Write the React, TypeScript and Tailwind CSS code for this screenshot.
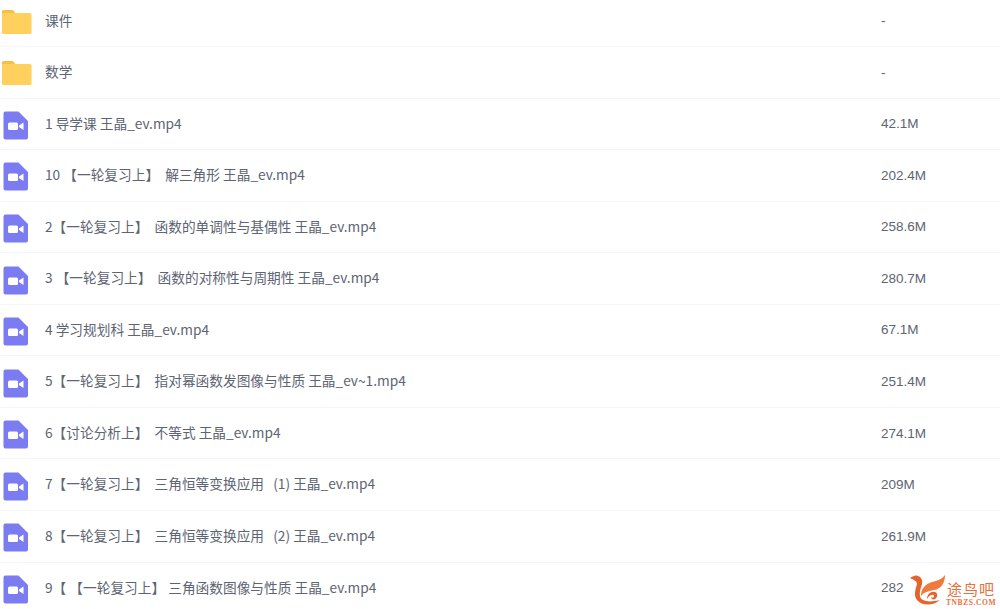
import React from "react";

const files = [
  { name: "课件", size: "-", folder: true },
  { name: "数学", size: "-", folder: true },
  { name: "1 导学课 王晶_ev.mp4", size: "42.1M" },
  { name: "10 【一轮复习上】  解三角形 王晶_ev.mp4", size: "202.4M" },
  { name: "2【一轮复习上】  函数的单调性与基偶性 王晶_ev.mp4", size: "258.6M" },
  { name: "3 【一轮复习上】  函数的对称性与周期性 王晶_ev.mp4", size: "280.7M" },
  { name: "4 学习规划科 王晶_ev.mp4", size: "67.1M" },
  { name: "5【一轮复习上】  指对幂函数发图像与性质 王晶_ev~1.mp4", size: "251.4M" },
  { name: "6【讨论分析上】  不等式 王晶_ev.mp4", size: "274.1M" },
  { name: "7【一轮复习上】  三角恒等变换应用   (1) 王晶_ev.mp4", size: "209M" },
  { name: "8【一轮复习上】  三角恒等变换应用   (2) 王晶_ev.mp4", size: "261.9M" },
  { name: "9【 【一轮复习上】 三角函数图像与性质 王晶_ev.mp4", size: "282" },
];

const FolderIcon = () => (
  <svg width="32" height="26" viewBox="0 0 32 26">
    <path d="M2 3.500C2 2.700 2.700 2 3.500 2h8.600c.5 0 1 .2 1.300.6L16 6H2z" fill="#f7c044" />
    <rect x="2" y="5" width="29.500" height="21" rx="1.500" fill="#ffd15c" />
  </svg>
);

const VideoIcon = () => (
  <svg width="30" height="32" viewBox="0 0 30 32">
    <path d="M5.500 3.500H18.500L28 13V29.500a2 2 0 0 1-2 2H5.500a2 2 0 0 1-2-2V5.500a2 2 0 0 1 2-2z" fill="#7b7bf2" />
    <rect x="8" y="14.500" width="10" height="7.500" rx="1.500" fill="#fff" />
    <path d="M19 17.500l4.500-3v7.500l-4.500-3z" fill="#fff" />
  </svg>
);

const Watermark = () => (
  <div className="absolute left-[908px] top-[573px] flex items-start">
    <svg width="38" height="33" viewBox="0 0 38 33" fill="none">
      <path d="M2 5C5 3 8 2 10 3C13 4 15 7 14 11C13 15 11 19 12 23C13 28 20 30 32 27C25 33 14 33 9 27C5 22 8 15 9 11C9 8 6 7 2 5z" fill="#e8622c" />
      <path d="M37 2C37 10 33 16 26 17C21 18 16 19 13 23C13 16 17 11 24 9C29 8 34 6 37 2z" fill="#ee7a3e" />
      <path d="M19 26C19 21 23 18 27 19C30 20 30 24 27 26C25 27 23 26 23 24C24 25 26 25 26 23C26 21 22 21 19 26z" fill="#e8622c" />
    </svg>
    <div className="mt-[7px] flex flex-col items-center">
      <span className="text-[15px] leading-[18px] tracking-[1px] text-[#e8703c] font-['Noto_Sans_CJK_SC',sans-serif]">途鸟吧</span>
      <span className="mt-[1px] text-[7.500px] leading-[8px] font-bold tracking-[0.600px] text-[#e8703c] font-['Liberation_Serif',serif]">TNBZS.COM</span>
    </div>
  </div>
);

export default function App() {
  return (
    <div className="relative h-[609px] w-[1000px] overflow-hidden bg-white font-['Noto_Sans_CJK_SC',sans-serif] text-[13.700px] text-[#5d6472]">
      <div className="-mt-[4.500px]">
        {files.map((file) => (
          <div key={file.name} className="flex h-[51.550px] items-center border-b border-[#f5f5f6]">
            <div className="flex w-[45px] shrink-0 items-center">
              {file.folder ? <FolderIcon /> : <VideoIcon />}
            </div>
            <div className="w-[836px] shrink-0 whitespace-pre pb-[2px]">{file.name}</div>
            <div className="pt-[1px] font-['Liberation_Sans',sans-serif] text-[13.500px]">{file.size}</div>
          </div>
        ))}
      </div>
      <Watermark />
    </div>
  );
}
